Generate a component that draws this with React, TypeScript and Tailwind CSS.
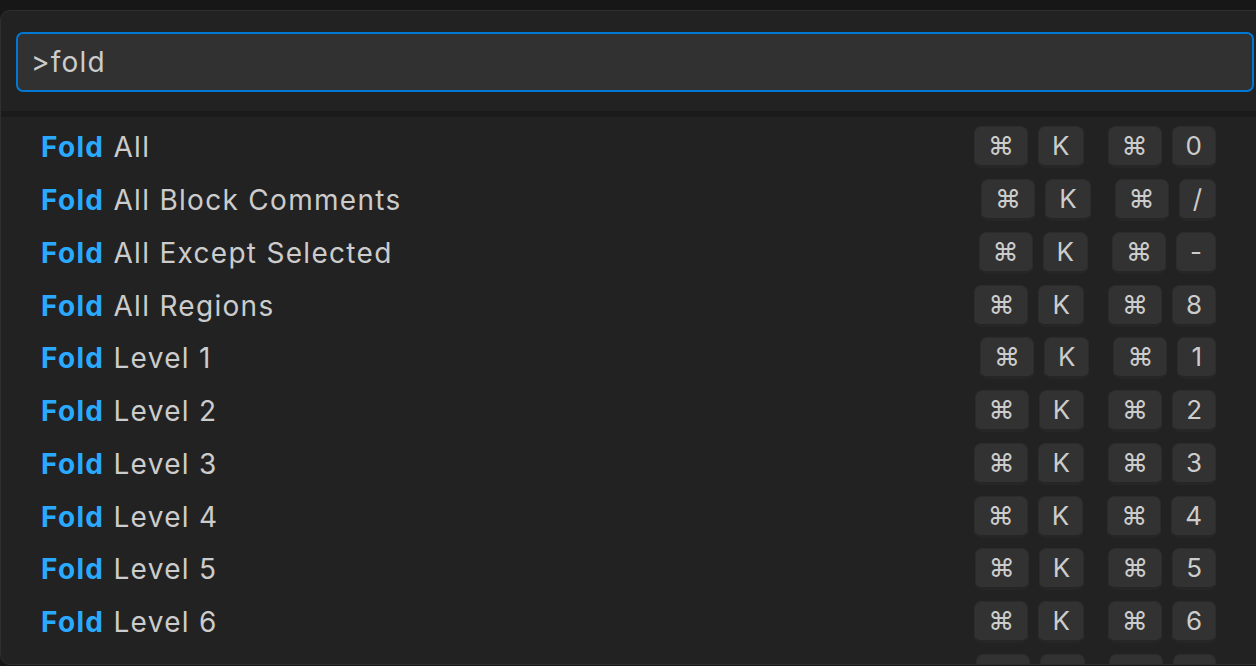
import React from "react";

type Item = {
  rest: string;
  keys: [string, string, string, string];
};

const items: Item[] = [
  { rest: "All", keys: ["⌘", "K", "⌘", "0"] },
  { rest: "All Block Comments", keys: ["⌘", "K", "⌘", "/"] },
  { rest: "All Except Selected", keys: ["⌘", "K", "⌘", "-"] },
  { rest: "All Regions", keys: ["⌘", "K", "⌘", "8"] },
  { rest: "Level 1", keys: ["⌘", "K", "⌘", "1"] },
  { rest: "Level 2", keys: ["⌘", "K", "⌘", "2"] },
  { rest: "Level 3", keys: ["⌘", "K", "⌘", "3"] },
  { rest: "Level 4", keys: ["⌘", "K", "⌘", "4"] },
  { rest: "Level 5", keys: ["⌘", "K", "⌘", "5"] },
  { rest: "Level 6", keys: ["⌘", "K", "⌘", "6"] },
  { rest: "Level 7", keys: ["⌘", "K", "⌘", "7"] },
];

const Key = ({ label }: { label: string }) => (
  <span className="h-[42px] px-[13px] flex items-center justify-center rounded-[7px] bg-[#323232] border border-[#2c2c2c] border-b-[3px] border-b-[#262626] text-[26px] text-[#cccccc] leading-none">
    {label}
  </span>
);

const Row = ({ item }: { item: Item }) => (
  <div className="h-[52.75px] flex items-center pl-[40px] pr-[53px]">
    <div className="flex-1 text-[28px] tracking-[1.3px] text-[#cccccc] whitespace-nowrap">
      <span className="font-bold text-[#2aaaff]">Fold</span> {item.rest}
    </div>
    <div className="flex items-center gap-[24px]">
      <div className="flex items-center gap-[10px]">
        <Key label={item.keys[0]} />
        <Key label={item.keys[1]} />
      </div>
      <div className="flex items-center gap-[10px]">
        <Key label={item.keys[2]} />
        <Key label={item.keys[3]} />
      </div>
    </div>
  </div>
);

const App = () => {
  return (
    <div
      className="w-[1256px] h-[666px] bg-[#171717] pt-[10px] overflow-hidden"
      style={{ fontFamily: "Inter, 'Noto Sans', sans-serif" }}
    >
      <div className="w-[1270px] h-[655px] rounded-[10px] border border-[#2f2f2f] bg-[#222222] overflow-hidden">
        {/* search box */}
        <div className="pl-[15px] pr-[15px] pt-[21px] pb-[19px]">
          <div className="h-[60px] flex items-center rounded-[7px] border-2 border-[#0078d4] bg-[#313131] pl-[13px]">
            <span className="text-[28px] tracking-[1.2px] text-[#cccccc]">&gt;fold</span>
          </div>
        </div>
        <div className="h-[6px] bg-[#1b1b1b]" />
        {/* results */}
        <div className="pt-[4px]">
          {items.map((item) => (
            <Row key={item.rest} item={item} />
          ))}
        </div>
      </div>
    </div>
  );
};

export default App;
